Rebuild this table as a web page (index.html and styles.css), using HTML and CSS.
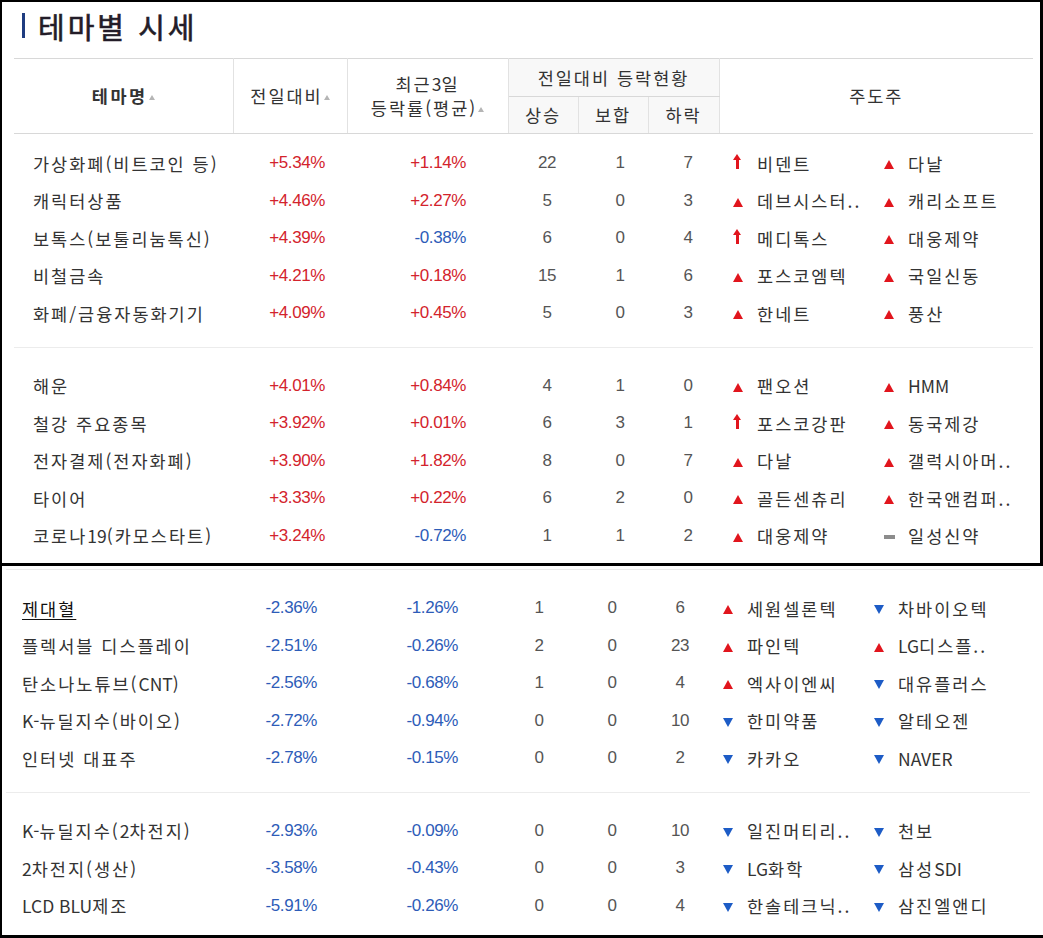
FILE: index.html
```html
<!DOCTYPE html>
<html lang="ko">
<head>
<meta charset="utf-8">
<title>테마별 시세</title>
<link rel="stylesheet" href="styles.css">
</head>
<body>
<section class="shot shot-top">
  <h2 class="title"><span class="bar"></span><span>테마별 시세</span></h2>
  <table class="theme tbl-top">
    <colgroup>
      <col class="w-name"><col class="w-chg"><col class="w-chg3"><col class="w-cnt"><col class="w-cnt"><col class="w-cnt3"><col class="w-lead">
    </colgroup>
    <thead>
      <tr class="h1">
        <th rowspan="2" class="hname first"><b>테마명</b><i class="sort"></i></th>
        <th rowspan="2">전일대비<i class="sort"></i></th>
        <th rowspan="2" class="two">최근<span class="en">3</span>일<br>등락률(평균)<i class="sort"></i></th>
        <th colspan="3" class="grp">전일대비 등락현황</th>
        <th rowspan="2" class="last">주도주</th>
      </tr>
      <tr class="h2">
        <th class="grp">상승</th><th class="grp">보합</th><th class="grp">하락</th>
      </tr>
    </thead>
    <tbody class="g g-first">
      <tr class="sp sp-t1"><td colspan="7"></td></tr>
      <tr class="r"><td class="name">가상화폐(비트코인 등)</td><td class="num chg up">+5.34%</td><td class="num chg3 up">+1.14%</td><td class="num cnt c1">22</td><td class="num cnt c2">1</td><td class="num cnt c3">7</td>
        <td class="lead"><div class="leads"><span class="stock"><span class="ic"><i class="limit"></i></span>비덴트</span><span class="stock"><span class="ic"><i class="tri-up"></i></span>다날</span></div></td></tr>
      <tr class="r"><td class="name">캐릭터상품</td><td class="num chg up">+4.46%</td><td class="num chg3 up">+2.27%</td><td class="num cnt c1">5</td><td class="num cnt c2">0</td><td class="num cnt c3">3</td>
        <td class="lead"><div class="leads"><span class="stock"><span class="ic"><i class="tri-up"></i></span>데브시스터..</span><span class="stock"><span class="ic"><i class="tri-up"></i></span>캐리소프트</span></div></td></tr>
      <tr class="r"><td class="name">보톡스(보툴리눔톡신)</td><td class="num chg up">+4.39%</td><td class="num chg3 dn">-0.38%</td><td class="num cnt c1">6</td><td class="num cnt c2">0</td><td class="num cnt c3">4</td>
        <td class="lead"><div class="leads"><span class="stock"><span class="ic"><i class="limit"></i></span>메디톡스</span><span class="stock"><span class="ic"><i class="tri-up"></i></span>대웅제약</span></div></td></tr>
      <tr class="r"><td class="name">비철금속</td><td class="num chg up">+4.21%</td><td class="num chg3 up">+0.18%</td><td class="num cnt c1">15</td><td class="num cnt c2">1</td><td class="num cnt c3">6</td>
        <td class="lead"><div class="leads"><span class="stock"><span class="ic"><i class="tri-up"></i></span>포스코엠텍</span><span class="stock"><span class="ic"><i class="tri-up"></i></span>국일신동</span></div></td></tr>
      <tr class="r"><td class="name">화폐/금융자동화기기</td><td class="num chg up">+4.09%</td><td class="num chg3 up">+0.45%</td><td class="num cnt c1">5</td><td class="num cnt c2">0</td><td class="num cnt c3">3</td>
        <td class="lead"><div class="leads"><span class="stock"><span class="ic"><i class="tri-up"></i></span>한네트</span><span class="stock"><span class="ic"><i class="tri-up"></i></span>풍산</span></div></td></tr>
      <tr class="sp sp-b"><td colspan="7"></td></tr>
    </tbody>
    <tbody class="g">
      <tr class="sp sp-t"><td colspan="7"></td></tr>
      <tr class="r"><td class="name">해운</td><td class="num chg up">+4.01%</td><td class="num chg3 up">+0.84%</td><td class="num cnt c1">4</td><td class="num cnt c2">1</td><td class="num cnt c3">0</td>
        <td class="lead"><div class="leads"><span class="stock"><span class="ic"><i class="tri-up"></i></span>팬오션</span><span class="stock"><span class="ic"><i class="tri-up"></i></span><span class="en">HMM</span></span></div></td></tr>
      <tr class="r"><td class="name">철강 주요종목</td><td class="num chg up">+3.92%</td><td class="num chg3 up">+0.01%</td><td class="num cnt c1">6</td><td class="num cnt c2">3</td><td class="num cnt c3">1</td>
        <td class="lead"><div class="leads"><span class="stock"><span class="ic"><i class="limit"></i></span>포스코강판</span><span class="stock"><span class="ic"><i class="tri-up"></i></span>동국제강</span></div></td></tr>
      <tr class="r"><td class="name">전자결제(전자화폐)</td><td class="num chg up">+3.90%</td><td class="num chg3 up">+1.82%</td><td class="num cnt c1">8</td><td class="num cnt c2">0</td><td class="num cnt c3">7</td>
        <td class="lead"><div class="leads"><span class="stock"><span class="ic"><i class="tri-up"></i></span>다날</span><span class="stock"><span class="ic"><i class="tri-up"></i></span>갤럭시아머..</span></div></td></tr>
      <tr class="r"><td class="name">타이어</td><td class="num chg up">+3.33%</td><td class="num chg3 up">+0.22%</td><td class="num cnt c1">6</td><td class="num cnt c2">2</td><td class="num cnt c3">0</td>
        <td class="lead"><div class="leads"><span class="stock"><span class="ic"><i class="tri-up"></i></span>골든센츄리</span><span class="stock"><span class="ic"><i class="tri-up"></i></span>한국앤컴퍼..</span></div></td></tr>
      <tr class="r"><td class="name">코로나<span class="en">19</span>(카모스타트)</td><td class="num chg up">+3.24%</td><td class="num chg3 dn">-0.72%</td><td class="num cnt c1">1</td><td class="num cnt c2">1</td><td class="num cnt c3">2</td>
        <td class="lead"><div class="leads"><span class="stock"><span class="ic"><i class="tri-up"></i></span>대웅제약</span><span class="stock"><span class="ic"><i class="flat"></i></span>일성신약</span></div></td></tr>
      <tr class="sp sp-b"><td colspan="7"></td></tr>
    </tbody>
  </table>
</section>
<section class="shot shot-bottom">
  <table class="theme tbl-bottom">
    <colgroup>
      <col class="w-name"><col class="w-chg"><col class="w-chg3"><col class="w-cnt"><col class="w-cnt"><col class="w-cnt3"><col class="w-lead-b">
    </colgroup>
    <tbody class="g">
      <tr class="sp sp-t"><td colspan="7"></td></tr>
      <tr class="r"><td class="name"><a class="hover">제대혈</a></td><td class="num chg dn">-2.36%</td><td class="num chg3 dn">-1.26%</td><td class="num cnt c1">1</td><td class="num cnt c2">0</td><td class="num cnt c3">6</td>
        <td class="lead"><div class="leads"><span class="stock"><span class="ic"><i class="tri-up"></i></span>세원셀론텍</span><span class="stock"><span class="ic"><i class="tri-dn"></i></span>차바이오텍</span></div></td></tr>
      <tr class="r"><td class="name">플렉서블 디스플레이</td><td class="num chg dn">-2.51%</td><td class="num chg3 dn">-0.26%</td><td class="num cnt c1">2</td><td class="num cnt c2">0</td><td class="num cnt c3">23</td>
        <td class="lead"><div class="leads"><span class="stock"><span class="ic"><i class="tri-up"></i></span>파인텍</span><span class="stock"><span class="ic"><i class="tri-up"></i></span><span class="en">LG</span>디스플..</span></div></td></tr>
      <tr class="r"><td class="name">탄소나노튜브(<span class="en">CNT</span>)</td><td class="num chg dn">-2.56%</td><td class="num chg3 dn">-0.68%</td><td class="num cnt c1">1</td><td class="num cnt c2">0</td><td class="num cnt c3">4</td>
        <td class="lead"><div class="leads"><span class="stock"><span class="ic"><i class="tri-up"></i></span>엑사이엔씨</span><span class="stock"><span class="ic"><i class="tri-dn"></i></span>대유플러스</span></div></td></tr>
      <tr class="r"><td class="name"><span class="en">K-</span>뉴딜지수(바이오)</td><td class="num chg dn">-2.72%</td><td class="num chg3 dn">-0.94%</td><td class="num cnt c1">0</td><td class="num cnt c2">0</td><td class="num cnt c3">10</td>
        <td class="lead"><div class="leads"><span class="stock"><span class="ic"><i class="tri-dn"></i></span>한미약품</span><span class="stock"><span class="ic"><i class="tri-dn"></i></span>알테오젠</span></div></td></tr>
      <tr class="r"><td class="name">인터넷 대표주</td><td class="num chg dn">-2.78%</td><td class="num chg3 dn">-0.15%</td><td class="num cnt c1">0</td><td class="num cnt c2">0</td><td class="num cnt c3">2</td>
        <td class="lead"><div class="leads"><span class="stock"><span class="ic"><i class="tri-dn"></i></span>카카오</span><span class="stock"><span class="ic"><i class="tri-dn"></i></span><span class="en">NAVER</span></span></div></td></tr>
      <tr class="sp sp-b"><td colspan="7"></td></tr>
    </tbody>
    <tbody class="g">
      <tr class="sp sp-t"><td colspan="7"></td></tr>
      <tr class="r"><td class="name"><span class="en">K-</span>뉴딜지수(<span class="en">2</span>차전지)</td><td class="num chg dn">-2.93%</td><td class="num chg3 dn">-0.09%</td><td class="num cnt c1">0</td><td class="num cnt c2">0</td><td class="num cnt c3">10</td>
        <td class="lead"><div class="leads"><span class="stock"><span class="ic"><i class="tri-dn"></i></span>일진머티리..</span><span class="stock"><span class="ic"><i class="tri-dn"></i></span>천보</span></div></td></tr>
      <tr class="r"><td class="name"><span class="en">2</span>차전지(생산)</td><td class="num chg dn">-3.58%</td><td class="num chg3 dn">-0.43%</td><td class="num cnt c1">0</td><td class="num cnt c2">0</td><td class="num cnt c3">3</td>
        <td class="lead"><div class="leads"><span class="stock"><span class="ic"><i class="tri-dn"></i></span><span class="en">LG</span>화학</span><span class="stock"><span class="ic"><i class="tri-dn"></i></span>삼성<span class="en">SDI</span></span></div></td></tr>
      <tr class="r"><td class="name"><span class="en">LCD BLU</span>제조</td><td class="num chg dn">-5.91%</td><td class="num chg3 dn">-0.26%</td><td class="num cnt c1">0</td><td class="num cnt c2">0</td><td class="num cnt c3">4</td>
        <td class="lead"><div class="leads"><span class="stock"><span class="ic"><i class="tri-dn"></i></span>한솔테크닉..</span><span class="stock"><span class="ic"><i class="tri-dn"></i></span>삼진엘앤디</span></div></td></tr>
      <tr class="sp sp-b"><td colspan="7"></td></tr>
    </tbody>
  </table>
</section>
</body>
</html>
```
FILE: styles.css
```css
* { box-sizing: border-box; }
html, body { margin: 0; padding: 0; }
body {
  width: 1043px;
  height: 938px;
  overflow: hidden;
  background: #fff;
  font-family: "Noto Sans CJK KR", "Noto Sans", sans-serif;
  color: #333;
}

.shot { overflow: hidden; background: #fff; }
.shot-top {
  height: 566px;
  border-top: 2px solid #000;
  border-left: 2px solid #000;
  border-right: 3px solid #000;
  border-bottom: 3px solid #000;
}
.shot-bottom {
  height: 372px;
  border-left: 2px solid #000;
  border-bottom: 3px solid #000;
}

.title {
  height: 56px;
  margin: 0;
  padding: 0 0 9px 20px;
  display: flex;
  align-items: center;
  gap: 13px;
  font-size: 29px;
  font-weight: 400;
  letter-spacing: 3px;
  color: #231c28;
  -webkit-text-stroke: 0.6px #231c28;
}
.title .bar {
  width: 3px;
  height: 25px;
  background: #1f3c80;
  flex: none;
}

.theme {
  border-collapse: collapse;
  table-layout: fixed;
  font-size: 17.5px;
  letter-spacing: 2px;
}
.en { letter-spacing: 0; }
.tbl-top { margin-left: 12px; width: 1019px; }
.tbl-bottom { margin-left: 4px; width: 1024px; margin-top: 3px; }

.w-name { width: 219px; }
.w-chg { width: 114px; }
.w-chg3 { width: 161px; }
.w-cnt { width: 70px; }
.w-cnt3 { width: 71px; }
.w-lead { width: 314px; }
.w-lead-b { width: 319px; }

/* header */
.theme thead th {
  font-weight: normal;
  color: #333;
  padding: 0;
  text-align: center;
  border: 1px solid #e2e2e2;
  border-top-color: #d8d8d8;
  border-bottom-color: #d8d8d8;
  line-height: 24px;
}
.theme thead th.first { border-left: 0; }
.theme thead th.last { border-right: 0; }
.theme thead th.grp { background: #f8f8f8; }
.theme thead .h1 { height: 38px; }
.theme thead .h2 { height: 37px; }
.theme thead th b { font-weight: 700; color: #333; letter-spacing: 2.5px; }
.sort {
  display: inline-block;
  width: 0;
  height: 0;
  margin-left: 1px;
  border-left: 3.5px solid transparent;
  border-right: 3.5px solid transparent;
  border-bottom: 5px solid #b5b5b5;
  vertical-align: 3px;
}
.two { line-height: 24px; }

/* body groups */
.theme tbody.g { border-top: 1px solid #ececec; }
.theme tbody.g-first { border-top: 0; }
.sp td { padding: 0; }
.sp-t1 td { height: 11px; }
.sp-t td { height: 20px; }
.sp-b td { height: 15px; }

.r td {
  height: 37.5px;
  padding: 0;
  white-space: nowrap;
  overflow: hidden;
  color: #333;
}
.r td.name { padding-left: 19px; text-align: left; }
.tbl-bottom .r td.name { padding-left: 16px; }
.num {
  font-family: "Liberation Sans", Arial, sans-serif;
  font-size: 17px;
}
.r td.num { letter-spacing: -0.4px; }
.r td.chg { text-align: right; padding-right: 22px; }
.r td.chg3 { text-align: right; padding-right: 42px; }
.r td.up { color: #d3232c; }
.r td.dn { color: #2d5cb8; }
.r td.cnt { text-align: center; color: #555; }
.r td.c1 { padding-left: 8px; }
.r td.c2 { padding-left: 14px; }
.r td.c3 { padding-left: 9px; }
.r td.lead { padding-left: 14px; }
.tbl-bottom .r td.lead { padding-left: 12px; }

.hover { color: #111; text-decoration: underline; text-underline-offset: 3px; }

.leads { display: flex; align-items: center; }
.stock { width: 151px; flex: none; display: flex; align-items: center; overflow: hidden; }
.ic { width: 24px; flex: none; display: flex; align-items: center; }

.tri-up, .tri-dn {
  display: block;
  width: 0;
  height: 0;
  border-left: 5px solid transparent;
  border-right: 5px solid transparent;
  margin-top: 3px;
}
.tri-up { border-bottom: 9px solid #e1151d; }
.tri-dn { border-top: 9px solid #1d5cc6; }
.flat {
  display: block;
  width: 11px;
  height: 4px;
  margin-top: 3px;
  background: #8c8c8c;
}
.limit {
  display: block;
  position: relative;
  width: 8px;
  height: 15px;
  margin-top: -4px;
}
.limit::before {
  content: "";
  position: absolute;
  left: 0;
  top: 0;
  border-left: 4px solid transparent;
  border-right: 4px solid transparent;
  border-bottom: 6px solid #e1151d;
}
.limit::after {
  content: "";
  position: absolute;
  left: 2.5px;
  top: 5px;
  width: 3px;
  height: 10px;
  background: #e1151d;
}
```
